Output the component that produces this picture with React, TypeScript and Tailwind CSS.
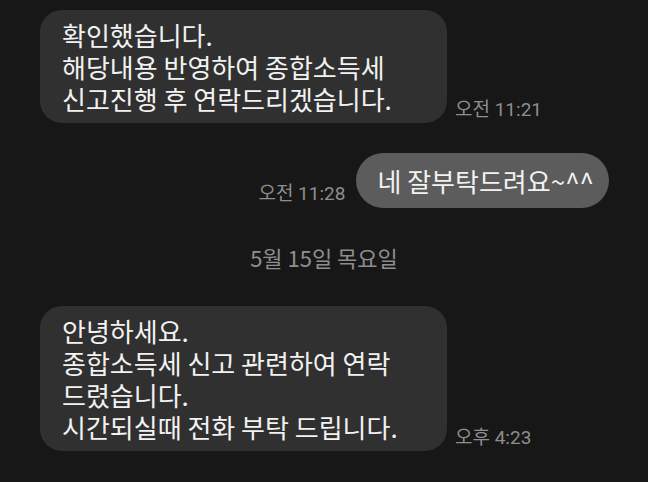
const KR = "font-['Noto_Sans_CJK_KR',sans-serif]";
const TIME = "font-['Roboto','Noto_Sans_CJK_KR',sans-serif]";

function Received({ lines, time }: { lines: string[]; time: string }) {
  return (
    <div className="flex items-end pl-[40px]">
      <div
        className={`w-[407px] rounded-[22px] bg-[#303030] pl-[22px] pr-4 pt-[9px] pb-[8px] text-[26px] leading-[32px] text-[#f2f2f2] ${KR}`}
      >
        {lines.map((l, i) => (
          <p key={i}>{l}</p>
        ))}
      </div>
      <span className={`ml-[8px] mb-[1px] text-[19px] leading-[24px] text-[#8e8e8e] ${TIME}`}>
        {time}
      </span>
    </div>
  );
}

function Sent({ text, time }: { text: string; time: string }) {
  return (
    <div className="flex items-end justify-end pr-[39px]">
      <span className={`mr-[11px] mb-[2px] text-[19px] leading-[24px] text-[#8e8e8e] ${TIME}`}>
        {time}
      </span>
      <div
        className={`flex h-[55px] items-center rounded-full bg-[#5c5c5c] pl-[21px] pr-[15px] text-[26px] text-[#f2f2f2] ${KR}`}
      >
        {text}
      </div>
    </div>
  );
}

export default function App() {
  return (
    <div className="h-[482px] w-[648px] overflow-hidden bg-[#171717] pt-[10px]">
      <Received
        lines={["확인했습니다.", "해당내용 반영하여 종합소득세", "신고진행 후 연락드리겠습니다."]}
        time="오전 11:21"
      />
      <div className="mt-[30px]">
        <Sent text="네 잘부탁드려요~^^" time="오전 11:28" />
      </div>
      <div className={`mt-[34px] text-center text-[22px] leading-[30px] text-[#8e8e8e] ${KR}`}>
        5월 15일 목요일
      </div>
      <div className="mt-[34px]">
        <Received
          lines={["안녕하세요.", "종합소득세 신고 관련하여 연락", "드렸습니다.", "시간되실때 전화 부탁 드립니다."]}
          time="오후 4:23"
        />
      </div>
    </div>
  );
}
